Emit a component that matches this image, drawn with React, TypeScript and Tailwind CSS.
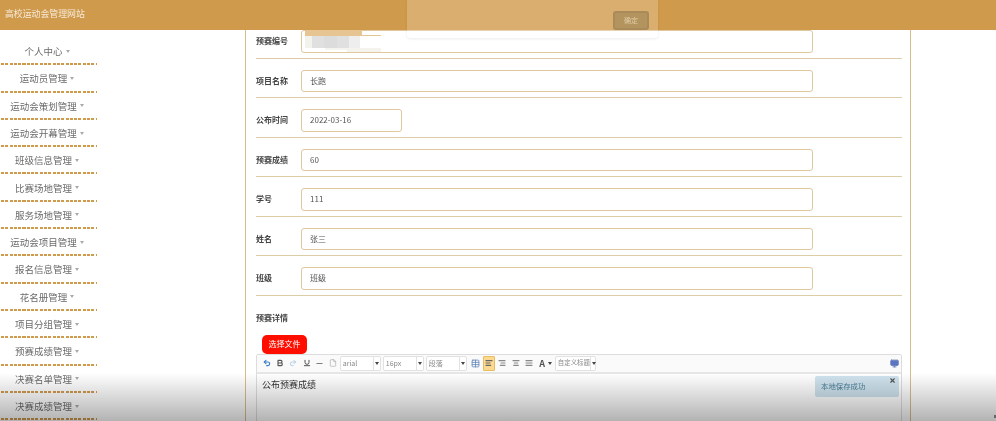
// Sports meet admin: edit form for a preliminary result, with rich-text editor below.
import type { ReactNode } from "react";
import { Undo2, Redo2, Bold, Underline, Minus, File, Table, AlignLeft, AlignRight, AlignCenter, AlignJustify, X, Monitor } from "lucide-react";

const MENU = [
  "个人中心", "运动员管理", "运动会策划管理", "运动会开幕管理", "班级信息管理", "比赛场地管理", "服务场地管理",
  "运动会项目管理", "报名信息管理", "花名册管理", "项目分组管理", "预赛成绩管理", "决赛名单管理", "决赛成绩管理",
];

const ROWS = [
  { label: "预赛编号", value: "", w: "w-[512px]" },
  { label: "项目名称", value: "长跑", w: "w-[512px]" },
  { label: "公布时间", value: "2022-03-16", w: "w-[101px]" },
  { label: "预赛成绩", value: "60", w: "w-[512px]" },
  { label: "学号", value: "111", w: "w-[512px]" },
  { label: "姓名", value: "张三", w: "w-[512px]" },
  { label: "班级", value: "班级", w: "w-[512px]" },
];

function Caret() {
  return <span className="ml-[3px] inline-block border-x-[2.5px] border-t-[3px] border-x-transparent border-t-[#aaa] align-middle" />;
}

function Btn({ children }: { children: ReactNode }) {
  return <span className="flex h-[15px] w-[13.3px] shrink-0 items-center justify-center">{children}</span>;
}

function Select({ label, className = "" }: { label: string; className?: string }) {
  return (
    <div className={`flex h-[15px] w-[41px] shrink-0 items-center whitespace-nowrap rounded-[2px] border border-[#e2e2e2] bg-white pl-[2px] text-[#888] ${className}`}>
      <span className="flex-1">{label}</span>
      <span className="h-full w-[2px] shrink-0 border-l border-[#e2e2e2]" />
      <span className="mr-[1px] shrink-0 border-x-[2px] border-t-[3px] border-x-transparent border-t-[#444]" />
    </div>
  );
}

export default function App() {
  return (
    <div className="relative h-[421px] w-[996px] overflow-hidden bg-white font-['Noto_Sans_CJK_SC','Liberation_Sans',sans-serif] blur-[0.45px]">
      <header className="relative z-10 flex h-[30px] items-center bg-[#d09a4c] pl-[5px] pb-[3px] text-[8.9px] text-[#f6ead8]">
        高校运动会管理网站
      </header>

      <div className="flex">
        <nav className="mt-[8px] w-[97px] shrink-0">
          {MENU.map((m) => (
            <div key={m} className="h-[27.3px]">
              <div className="flex h-[25.3px] items-center justify-center pr-[3px] pt-[1px] text-[9.5px] text-[#6b6b6b]">
                {m}
                <Caret />
              </div>
              <div className="ml-[1px] h-[2px] bg-[repeating-linear-gradient(90deg,#d09a4c_0,#d09a4c_3px,transparent_3px,transparent_4.3px)]" />
            </div>
          ))}
        </nav>

        <main className="ml-[148px] mt-[-11px] w-[666px] shrink-0 border-x border-[#d8bd8c] pl-[10px] pr-[8px]">
          {ROWS.map((r) => (
            <div key={r.label} className="flex h-[39.5px] items-center border-b border-[#dccda6] pt-[6px]">
              <label className="w-[45px] shrink-0 text-[8px] font-bold text-[#444]">{r.label}</label>
              <div className={`flex h-[22.5px] items-center rounded-[3px] border-[1.5px] border-[#e0c89e] pl-[8px] text-[8px] text-[#555] ${r.w}`}>
                {r.value}
              </div>
            </div>
          ))}

          <div className="pt-[16px] text-[8px] font-bold text-[#444]">预赛详情</div>
          <button className="ml-[6px] mt-[11px] flex h-[19px] w-[45px] items-center justify-center rounded-[5px] bg-[#ff0e00] text-[8px] text-white">
            选择文件
          </button>

          <div className="h-[80px] rounded-[2px] border border-[#ddd]">
            <div className="flex h-[19px] items-center border-b-2 border-[#e6e6e6] bg-[#fafafa] pl-[3px] text-[#555]">
              <Btn><Undo2 size={8} strokeWidth={3.5} className="text-[#3b7fc4]" /></Btn>
              <Btn><Bold size={8} strokeWidth={3.5} /></Btn>
              <Btn><Redo2 size={8} strokeWidth={3} className="text-[#b5d0e6]" /></Btn>
              <Btn><Underline size={8} strokeWidth={3} /></Btn>
              <Btn><Minus size={9} strokeWidth={2} /></Btn>
              <Btn><File size={8} className="text-[#aaa]" /></Btn>
              <Select label="arial" className="text-[7px]" />
              <Select label="16px" className="ml-[2px] text-[7px]" />
              <Select label="段落" className="ml-[2px] text-[7px]" />
              <span className="ml-[2.3px]" />
              <Btn><Table size={9} className="text-[#5b7fb5]" /></Btn>
              <Btn>
                <span className="flex h-[15px] w-[12px] items-center justify-center rounded-[1px] border border-[#e8bd62] bg-[#fbd98f]">
                  <AlignLeft size={8} strokeWidth={3.5} className="text-[#666]" />
                </span>
              </Btn>
              <Btn><AlignRight size={8} strokeWidth={3.5} className="text-[#888]" /></Btn>
              <Btn><AlignCenter size={8} strokeWidth={3.5} className="text-[#888]" /></Btn>
              <Btn><AlignJustify size={8} strokeWidth={3.5} className="text-[#888]" /></Btn>
              <Btn><span className="text-[9px] font-bold leading-none">A</span></Btn>
              <span className="ml-[-1px] border-x-[2px] border-t-[3px] border-x-transparent border-t-[#444]" />
              <Select label="自定义标题" className="ml-[3px] text-[6.4px]" />
              <Monitor size={9} strokeWidth={2.5} className="ml-auto mr-[2px] fill-[#5b74c4] text-[#6b7fb8]" />
            </div>
            <div className="relative px-[5px] pt-[4px] text-[9px] text-[#333]">
              公布预赛成绩
              <div className="absolute right-[2px] top-[2px] flex h-[21px] w-[84px] items-center rounded-[2px] bg-[#cfe3ee] pl-[6px] text-[7.4px] text-[#4a7f99]">
                本地保存成功
                <X size={7} strokeWidth={4} className="absolute right-[3px] top-[1px] text-[#555]" />
              </div>
            </div>
          </div>
        </main>
      </div>

      {/* dialog left over the header, mostly transparent */}
      <div className="absolute left-[407px] top-0 z-20 h-[38px] w-[251px] rounded-b-[3px] bg-white/20 shadow-[0_1px_3px_rgba(0,0,0,0.08)]">
        <div className="absolute left-[206px] top-[11px] flex h-[19px] w-[36px] items-center justify-center rounded-[3px] border-2 border-[#a98a58] bg-[#b3945f] text-[7px] text-[#e3cfa8]">
          确定
        </div>
      </div>

      {/* smudged-out value in the first field */}
      <div className="absolute left-[305px] top-[30px] z-20 flex h-[22px] w-[76px] flex-col">
        <div className="h-[5px] w-[57px] bg-[#e6c592]" />
        <div className="h-[1px] bg-[#e6c592]" />
        <div className="flex h-[12px] w-[55px]">
          <div className="w-[7px] bg-[#f3f3ee]" />
          <div className="w-[12px] bg-[#e0e0e0]" />
          <div className="w-[13px] bg-[#dcdcdc]" />
          <div className="w-[12px] bg-[#e0e0e0]" />
          <div className="w-[11px] bg-[#eeeeee]" />
        </div>
        <div className="ml-[20px] h-[2px] bg-[#f5f3ed]" />
        <div className="ml-[42px] h-[2px] bg-[#f5f3ed]" />
      </div>

      {/* page fades to grey at the bottom edge */}
      <div className="pointer-events-none absolute inset-x-0 bottom-0 z-30 h-[48px] bg-gradient-to-b from-transparent to-black/30" />
      <div className="absolute bottom-[3px] right-0 z-30 h-[3px] w-[2px] bg-[#666]" />
    </div>
  );
}
